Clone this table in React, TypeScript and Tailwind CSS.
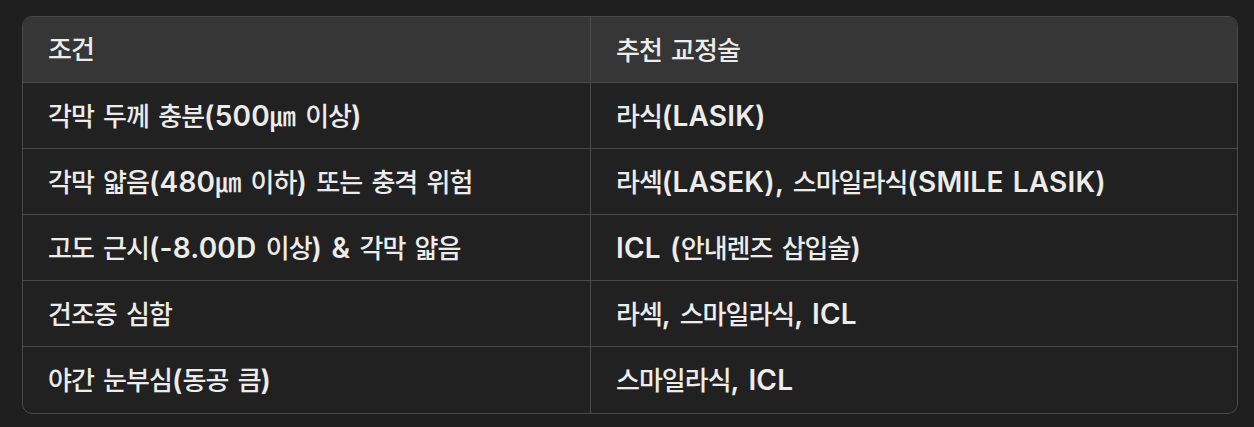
import React from "react";

const rows: [string, string][] = [
  ["각막 두께 충분(500㎛ 이상)", "라식(LASIK)"],
  ["각막 얇음(480㎛ 이하) 또는 충격 위험", "라섹(LASEK), 스마일라식(SMILE LASIK)"],
  ["고도 근시(-8.00D 이상) & 각막 얇음", "ICL (안내렌즈 삽입술)"],
  ["건조증 심함", "라섹, 스마일라식, ICL"],
  ["야간 눈부심(동공 큼)", "스마일라식, ICL"],
];

const HANGUL = /[\uac00-\ud7a3]/;

function Mixed({ text }: { text: string }) {
  const runs = text.match(/[\uac00-\ud7a3]+|\u339b|[^\uac00-\ud7a3\u339b]+/g) ?? [];
  return (
    <span className="[word-spacing:2px]">
      {runs.map((r, i) =>
        r === "㎛" ? (
          <span key={i} className="font-['Noto_Sans_CJK_KR'] text-[26px] font-medium">
            {r}
          </span>
        ) : HANGUL.test(r) ? (
          <span key={i} className="text-[26px] font-medium tracking-[-1px]">
            {r}
          </span>
        ) : (
          <span key={i} className="text-[28px] font-semibold tracking-[0.2px]">
            {r}
          </span>
        )
      )}
    </span>
  );
}

export default function App() {
  return (
    <div
      className="min-h-[427px] w-full bg-[#1f1f1f] pt-[16px] pl-[22px] pr-[16px]"
      style={{ fontFamily: 'Inter, "Noto Sans CJK KR", sans-serif' }}
    >
      <div className="w-[1216px] overflow-hidden rounded-[10px] border border-[#4a4a4a] bg-[#212121] leading-none text-[#ececec]">
        <div className="grid h-[66px] grid-cols-[568px_1fr] border-b border-[#4a4a4a] bg-[#363636]">
          <div className="flex items-center border-r border-[#4a4a4a] pl-[25px]">
            <Mixed text="조건" />
          </div>
          <div className="flex items-center pl-[25px]">
            <Mixed text="추천 교정술" />
          </div>
        </div>
        {rows.map(([a, b], i) => (
          <div
            key={a}
            className={`grid h-[66px] grid-cols-[568px_1fr] ${i < rows.length - 1 ? "border-b border-[#4a4a4a]" : ""}`}
          >
            <div className="flex items-center border-r border-[#4a4a4a] pl-[25px]">
              <Mixed text={a} />
            </div>
            <div className="flex items-center pl-[25px]">
              <Mixed text={b} />
            </div>
          </div>
        ))}
      </div>
    </div>
  );
}
